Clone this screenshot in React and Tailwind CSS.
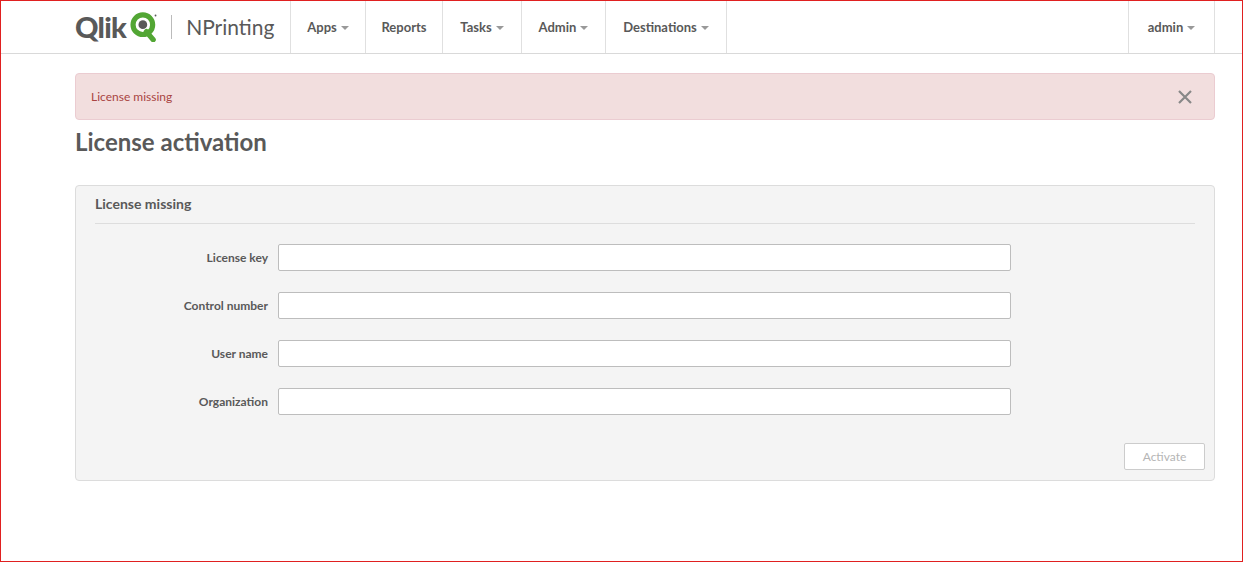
const F = { fontFamily: "Lato, 'Open Sans', sans-serif" };

function Caret() {
  return <span className="ml-1 inline-block w-0 h-0 border-l-[4px] border-r-[4px] border-t-[4px] border-l-transparent border-r-transparent border-t-[#999] align-middle" />;
}

function NavItem({ label, caret, w }) {
  return (
    <div className={`h-full flex items-center justify-center pt-[2px] border-l border-[#e0e0e0] text-[13px] font-bold text-[#595959] ${w}`}>
      {label}{caret && <Caret />}
    </div>
  );
}

const fields = ["License key", "Control number", "User name", "Organization"];

export default function App() {
  return (
    <div className="h-[562px] border border-[#e02020] bg-white overflow-hidden" style={F}>
      <div className="h-[53px] border-b border-[#d9d9d9] flex items-stretch pl-[74px] pr-[27px]">
        <div className="flex items-center w-[215px]">
          <span className="text-[29px] font-black text-[#595959] tracking-tight">Qlik</span>
          <svg width="30" height="30" viewBox="0 0 24 26" className="ml-[3px]">
            <circle cx="11" cy="11" r="8.5" fill="none" stroke="#52a634" strokeWidth="4.5" />
            <circle cx="11" cy="11" r="3.8" fill="#595959" />
            <path d="M14 17 L20 24" stroke="#52a634" strokeWidth="4.5" strokeLinecap="round" />
            <circle cx="22" cy="3" r="0.8" fill="#595959" />
          </svg>
          <span className="ml-[12px] mr-[14px] h-[24px] border-l border-[#bbb]" />
          <span className="text-[21px] text-[#595959]">NPrinting</span>
        </div>
        <NavItem label="Apps" caret w="w-[75px]" />
        <NavItem label="Reports" w="w-[77px]" />
        <NavItem label="Tasks" caret w="w-[79px]" />
        <NavItem label="Admin" caret w="w-[84px]" />
        <div className="h-full flex items-center justify-center pt-[2px] border-l border-r border-[#e0e0e0] text-[13px] font-bold text-[#595959] w-[122px]">Destinations<Caret /></div>
        <div className="flex-1" />
        <div className="h-full flex items-center justify-center pt-[2px] border-l border-r border-[#e0e0e0] text-[13px] font-bold text-[#595959] w-[87px]">admin<Caret /></div>
      </div>

      <div className="px-[74px] pr-[27px]">
        <div className="mt-[19px] h-[47px] bg-[#f2dede] border border-[#ebccd1] rounded flex items-center justify-between px-[15px] text-[12px] text-[#a94442]">
          <span>License missing</span>
          <svg width="14" height="14" viewBox="0 0 14 14" className="mr-[7px]"><path d="M1 1L13 13M13 1L1 13" stroke="#888" strokeWidth="2.2" /></svg>
        </div>
        <h1 className="mt-[7px] text-[24px] font-bold text-[#595959] leading-[30px]">License activation</h1>
        <div className="mt-[28px] h-[296px] bg-[#f4f4f4] border border-[#dcdcdc] rounded-sm px-[19px] pt-[8px]">
          <div className="text-[14px] font-bold text-[#595959] leading-[20px] pb-[9px] border-b border-[#ddd]">License missing</div>
          <div className="mt-[20px] flex flex-col gap-[21px]">
            {fields.map(f => (
              <div key={f} className="flex items-center">
                <label className="w-[183px] text-right pr-[10px] text-[12px] font-bold text-[#595959]">{f}</label>
                <input className="w-[733px] h-[27px] bg-white border border-[#bdbdbd] rounded-[2px]" />
              </div>
            ))}
          </div>
          <div className="mt-[28px] flex justify-end">
            <button className="mr-[-10px] w-[81px] h-[27px] bg-white border border-[#ccc] rounded-[2px] text-[12px] text-[#b5b5b5]">Activate</button>
          </div>
        </div>
      </div>
    </div>
  );
}
